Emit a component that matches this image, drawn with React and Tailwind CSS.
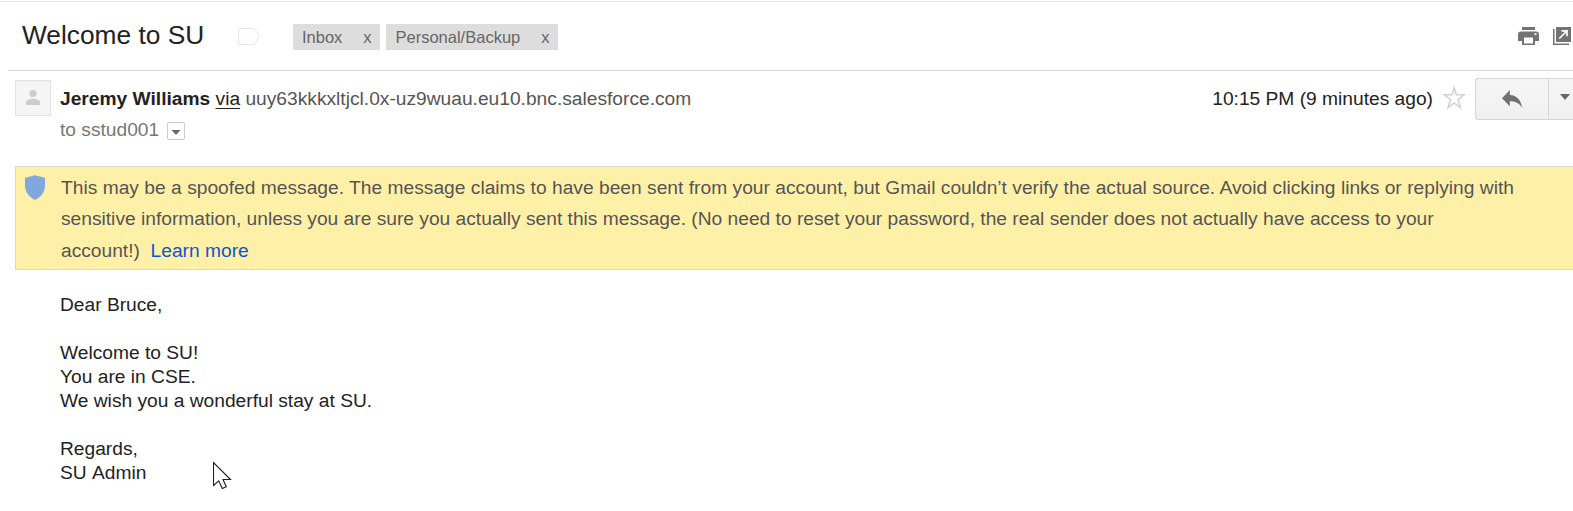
function Label({ name, className }) {
  return (
    <div className={`flex h-[26px] items-center justify-between bg-[#dddddd] pr-[8.5px] text-[16.5px] leading-[26px] text-[#666666] ${className}`}>
      <span>{name}</span>
      <span>x</span>
    </div>
  );
}

function SubjectBar() {
  return (
    <div className="ml-[8px] flex h-[69px] items-start border-b border-[#d8d8d8] pl-[14px]">
      <h1 className="mt-[16px] w-[216px] whitespace-nowrap text-[26.3px] leading-[34px] text-[#222222]">Welcome to SU</h1>
      <svg className="mt-[26px] h-[17px] w-[22px]" viewBox="0 0 22 17">
        <path d="M0.5 0.5H16.5L21.3 8.5L16.5 16.5H0.5Z" fill="#fefefe" stroke="#e6e6e6" />
      </svg>
      <div className="ml-[33px] mt-[22px] flex gap-[6px]">
        <Label name="Inbox" className="w-[87px] pl-[9px]" />
        <Label name="Personal/Backup" className="w-[172px] pl-[9.5px]" />
      </div>
      <svg className="ml-auto mt-[25px] h-[18px] w-[21px]" viewBox="0 0 21 18" fill="#737373">
        <path d="M4 0H17V3H4Z" />
        <path fillRule="evenodd" d="M3 4.500H18Q21 4.500 21 7.500V14H17V18H4V14H0V7.500Q0 4.500 3 4.500ZM6 10.500V16.500H15V10.500ZM16.500 6.200H18.500V8H16.500Z" />
      </svg>
      <svg className="ml-[14px] mr-[2px] mt-[25px] h-[18px] w-[18px]" viewBox="0 0 18 18">
        <path d="M0 2H1.500V16.500H16V18H0Z" fill="#737373" />
        <path d="M3 0H18V15H3Z" fill="#737373" />
        <path d="M6.300 11.500L13.500 4.300M8.500 3.800H14V9.300" fill="none" stroke="#ffffff" strokeWidth="1.700" />
      </svg>
    </div>
  );
}

function MessageHeader() {
  return (
    <div className="flex h-[95px] items-start pl-[15px] pt-[7px]">
      <div className="mt-[2px] h-[36px] w-[36px] shrink-0 border border-[#e2e2e2] bg-[#f5f5f5]">
        <svg className="h-[34px] w-[34px]" viewBox="0 0 34 34" fill="#cccccc">
          <circle cx="17" cy="12.500" r="3.600" />
          <path d="M10 24V21.500C10 18.900 14 17.800 17 17.800S24 18.900 24 21.500V24Z" />
        </svg>
      </div>
      <div className="ml-[9px] text-[19.2px] leading-[31px]">
        <div className="mt-[5px] whitespace-pre text-[#555555]">
          <span className="font-bold text-[#222222]">Jeremy Williams</span>{" "}
          <span className="text-[#222222] underline decoration-1 underline-offset-[2.5px]">via</span>{" "}
          <span>uuy63kkkxltjcl.0x-uz9wuau.eu10.bnc.salesforce.com</span>
        </div>
        <div className="flex items-center text-[#777777]">
          <span>to sstud001</span>
          <span className="ml-[8px] mt-[3px] flex h-[18px] w-[18px] items-center justify-center rounded-[2px] border border-[#cccccc]">
            <svg className="mt-[2px] h-[5px] w-[10px]" viewBox="0 0 10 5">
              <path d="M0.500 0H9.500L5 5Z" fill="#666666" />
            </svg>
          </span>
        </div>
      </div>
      <div className="ml-auto mt-[5px] whitespace-nowrap text-[19.2px] leading-[31px] text-[#222222]">10:15 PM (9 minutes ago)</div>
      <svg className="ml-[9px] mt-[7px] h-[25px] w-[24px]" viewBox="0 0 24 25">
        <path d="M12.200 2.700L14.300 9.800H22L15.900 14.600L18.400 22.600L12.200 18L6 22.600L8.500 14.600L2.400 9.800H10.100Z" fill="#ffffff" stroke="#d4d4d4" strokeWidth="1.600" />
      </svg>
      <div className="ml-[9px] flex h-[42px] w-[98px] shrink-0 rounded-l-[3px] border border-r-0 border-[#d6d6d6] bg-linear-to-b from-[#f5f5f5] to-[#f0f0f0]">
        <div className="flex w-[73px] items-center justify-center border-r border-[#d6d6d6]">
          <svg className="h-[18px] w-[20px]" viewBox="0 0 20 18">
            <path d="M7.800 0V5C15 5.500 19 10 20 17.500C17 13 13.500 11.300 7.800 11.300V16.300L0 8.200Z" fill="#707070" />
          </svg>
        </div>
        <div className="flex flex-1 items-center pb-[4px] pl-[11px]">
          <svg className="h-[6px] w-[10px]" viewBox="0 0 10 6">
            <path d="M0 0H10L5 6Z" fill="#666666" />
          </svg>
        </div>
      </div>
    </div>
  );
}

function SpoofWarning() {
  return (
    <div className="ml-[15px] flex h-[104px] border border-r-0 border-[#d8d8d8] bg-[#fff0a8]">
      <svg className="ml-[9px] mt-[8px] h-[25px] w-[20px] shrink-0" viewBox="0 0 20 25">
        <path d="M10 0.300L19 2.500Q20 2.800 20 4V11C20 17 15.500 22.500 10 25C4.500 22.500 0 17 0 11V4Q0 2.800 1 2.500Z" fill="#80a8dc" />
      </svg>
      <p className="ml-[16px] mt-[5px] whitespace-pre text-[19.2px] leading-[31.3px] text-[#555555]">
        <span className="[word-spacing:0.075px]">This may be a spoofed message. The message claims to have been sent from your account, but Gmail couldn’t verify the actual source. Avoid clicking links or replying with</span><br />
        sensitive information, unless you are sure you actually sent this message. (No need to reset your password, the real sender does not actually have access to your<br />
        account!){"  "}<a className="text-[#1155cc]">Learn more</a>
      </p>
    </div>
  );
}

export default function App() {
  return (
    <div className="relative h-[511px] w-[1573px] overflow-hidden bg-white font-['Liberation_Sans',Arial,sans-serif]">
      <div className="mt-px h-px bg-[#e5e5e5]" />
      <SubjectBar />
      <MessageHeader />
      <SpoofWarning />
      <div className="ml-[60px] mt-[23px] text-[19.2px] leading-[24px] text-[#222222]">
        <p>Dear Bruce,</p>
        <p className="mt-[24px]">Welcome to SU!</p>
        <p>You are in CSE.</p>
        <p>We wish you a wonderful stay at SU.</p>
        <p className="mt-[24px]">Regards,</p>
        <p className="[word-spacing:1px]">SU Admin</p>
      </div>
      <svg className="absolute left-[213px] top-[461px] h-[29px] w-[19px]" viewBox="0 0 19 29">
        <path d="M0.500 1.500V24.500L5.700 19.800L9.300 27.500L13.300 25.700L10 18.500H17.500Z" fill="#ffffff" stroke="#1c1c28" strokeWidth="1.100" />
      </svg>
    </div>
  );
}
